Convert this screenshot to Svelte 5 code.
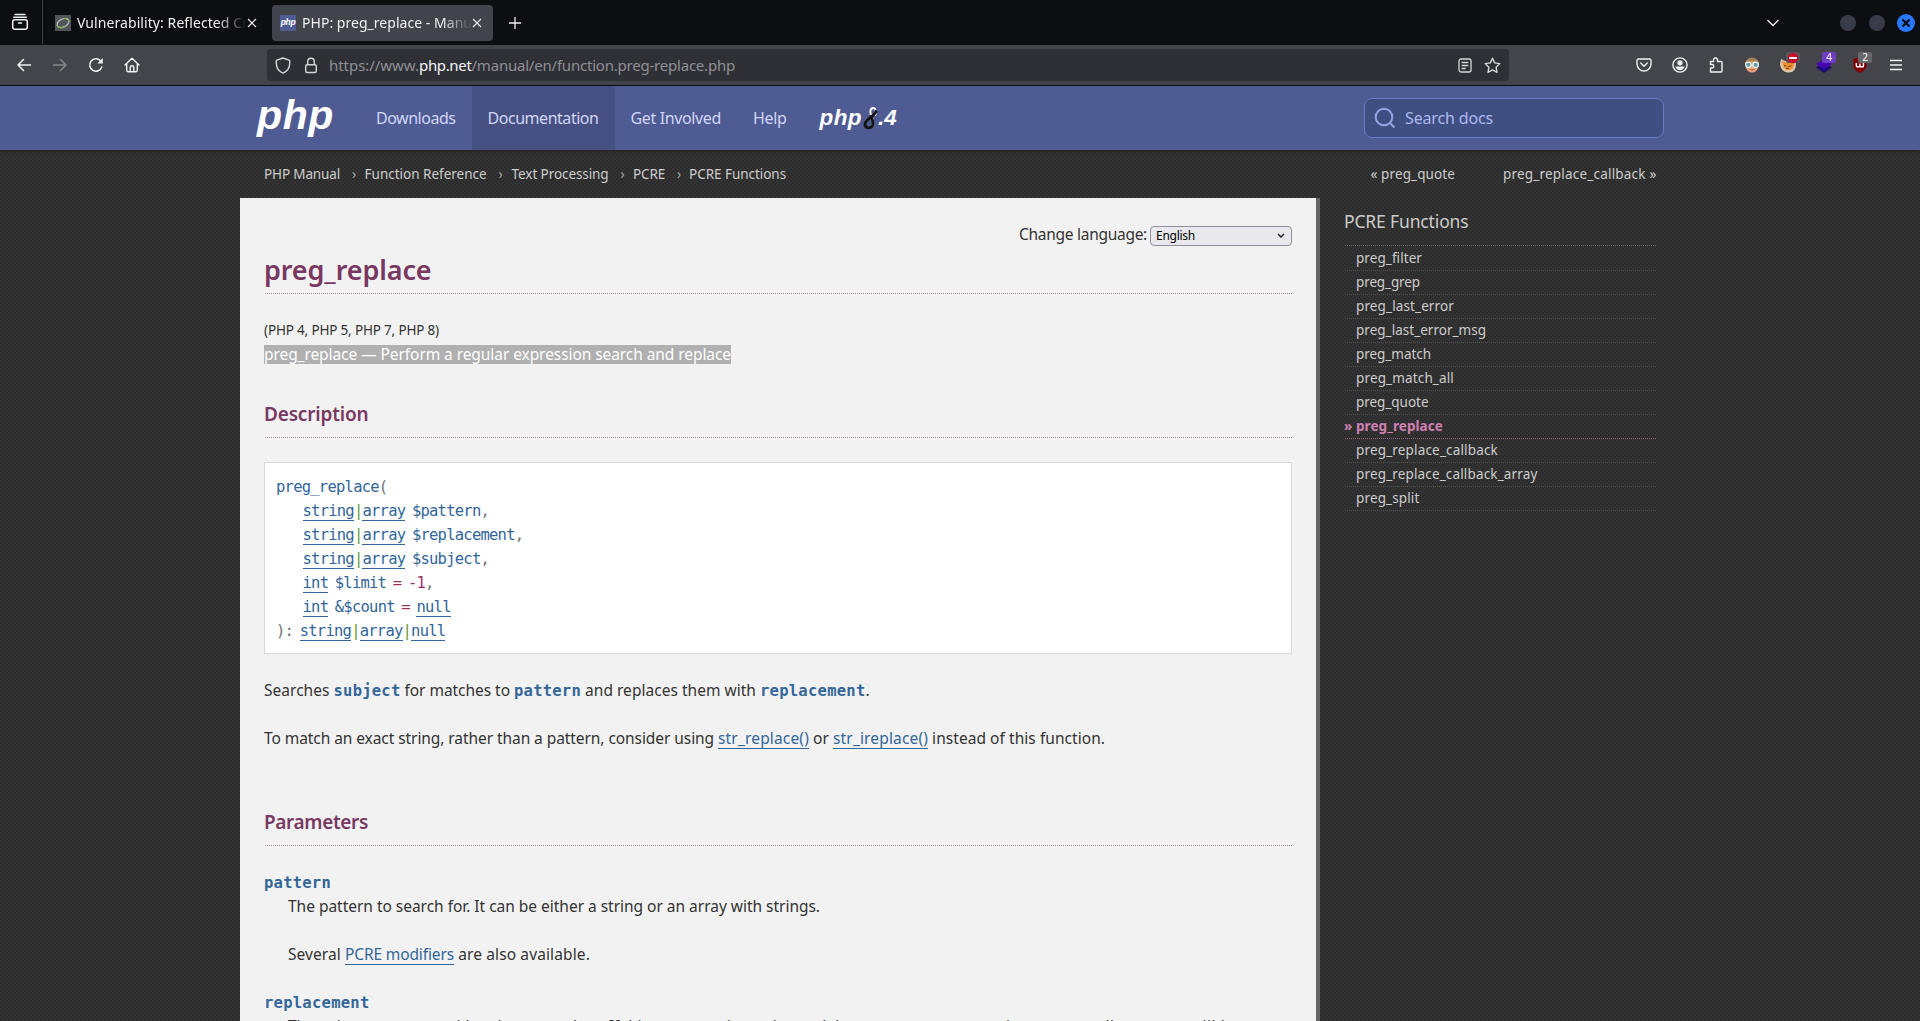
<script>
  // Tunes letter-spacing so that a run of text occupies the given width.
  function fit(node, width) {
    const natural = node.getBoundingClientRect().width;
    const count = [...node.textContent].length;
    if (width && count) node.style.letterSpacing = `${(width - natural) / count}px`;
  }

  const menu = [
    { label: 'Downloads', w: 79.5 },
    { label: 'Documentation', w: 111, active: true },
    { label: 'Get Involved', w: 90.5 },
    { label: 'Help', w: 33.5 }
  ];

  const crumbs = [
    { label: 'PHP Manual', w: 76, cell: 100.6 },
    { label: 'Function Reference', w: 122, cell: 147 },
    { label: 'Text Processing', w: 97, cell: 121.5 },
    { label: 'PCRE', w: 32, cell: 56 },
    { label: 'PCRE Functions', w: 97, cell: 98 }
  ];

  const functions = [
    ['preg_filter', 66], ['preg_grep', 64], ['preg_last_error', 98],
    ['preg_last_error_msg', 130], ['preg_match', 75], ['preg_match_all', 98],
    ['preg_quote', 72.5], ['preg_replace', 87], ['preg_replace_callback', 142],
    ['preg_replace_callback_array', 181.5], ['preg_split', 63.5]
  ];
  const current = 'preg_replace';

  // Each signature row is a list of [text, width, kind] runs.
  const ch = 8.57;
  const args = [
    [['string', 6 * ch, 'link'], ['|', ch, 'pipe'], ['array', 5 * ch, 'link'], [' ', 6.57, ''], ['$pattern', 8 * ch, 'name'], [',', ch, '']],
    [['string', 6 * ch, 'link'], ['|', ch, 'pipe'], ['array', 5 * ch, 'link'], [' ', 6.57, ''], ['$replacement', 12 * ch, 'name'], [',', ch, '']],
    [['string', 6 * ch, 'link'], ['|', ch, 'pipe'], ['array', 5 * ch, 'link'], [' ', 6.57, ''], ['$subject', 8 * ch, 'name'], [',', ch, '']],
    [['int', 3 * ch, 'link'], [' ', 6.57, ''], ['$limit', 6 * ch, 'name'], [' ', 6.57, ''], ['=', ch, 'init'], [' ', 6.57, ''], ['-1', 2 * ch, 'init'], [',', ch, '']],
    [['int', 3 * ch, 'link'], [' ', 6.57, ''], ['&$count', 7 * ch, 'name'], [' ', 6.57, ''], ['=', ch, 'init'], [' ', 6.57, ''], ['null', 4 * ch, 'link']]
  ];
  const returns = [['):', 2 * ch, ''], [' ', 6.57, ''], ['string', 6 * ch, 'link'], ['|', ch, 'pipe'], ['array', 5 * ch, 'link'], ['|', ch, 'pipe'], ['null', 4 * ch, 'link']];
</script>

{#snippet run(text, width, kind)}
  <span class="run {kind}" use:fit={width}>{text}</span>
{/snippet}

<div class="browser">
  <div class="tabs">
    <div class="firefox-view">
      <svg width="18" height="18" viewBox="0 0 18 18" fill="none" stroke="#f0f0f2" stroke-width="1.5" stroke-linecap="round">
        <path d="M4 1.5h10M2.7 4.2h12.6" /><rect x="1.7" y="6.7" width="14.6" height="9.6" rx="2" /><path d="M7.5 10h3" />
      </svg>
    </div>
    <div class="tab">
      <svg class="favicon" width="16" height="16" viewBox="0 0 16 16">
        <rect width="16" height="16" fill="#50565a" />
        <ellipse cx="8" cy="8" rx="6.3" ry="4" transform="rotate(-25 8 8)" fill="none" stroke="#b9bfc0" stroke-width="1.2" />
        <path d="M2 10.5c1 3 5 3 8.5 .5M9 3.5c3-.8 5 .5 5 2.5" fill="none" stroke="#8cb83a" stroke-width="1" />
      </svg>
      <div class="title">{@render run('Vulnerability: Reflected Cr', 171, '')}</div>
      <svg class="x" width="10" height="10" viewBox="0 0 10 10"><path d="M1 1l8 8M9 1l-8 8" stroke="#e8e8ea" stroke-width="1.2" /></svg>
    </div>
    <div class="tab selected">
      <div class="favicon phpicon">php</div>
      <div class="title">{@render run('PHP: preg_replace - Manu', 170, '')}</div>
      <svg class="x" width="10" height="10" viewBox="0 0 10 10"><path d="M1 1l8 8M9 1l-8 8" stroke="#e8e8ea" stroke-width="1.2" /></svg>
    </div>
    <svg class="plus" width="12" height="12" viewBox="0 0 12 12"><path d="M6 0v12M0 6h12" stroke="#f0f0f2" stroke-width="1.3" /></svg>
    <svg class="down" width="14" height="8" viewBox="0 0 14 8"><path d="M1.5 1l5.5 5.5L12.5 1" fill="none" stroke="#f0f0f2" stroke-width="1.4" /></svg>
    <div class="window">
      <i></i><i></i>
      <svg width="18" height="18" viewBox="0 0 18 18"><circle cx="9" cy="9" r="9" fill="#2777ff" /><path d="M5.5 5.5l7 7M12.5 5.5l-7 7" stroke="#0c0d12" stroke-width="2.3" /></svg>
    </div>
  </div>

  <div class="toolbar">
    <div class="controls">
      <svg width="16" height="16" viewBox="0 0 16 16" fill="none" stroke="#f2f2f4" stroke-width="1.5" stroke-linecap="round" stroke-linejoin="round"><path d="M14.5 8H2M7.5 2.5L2 8l5.5 5.5" /></svg>
      <svg width="16" height="16" viewBox="0 0 16 16" fill="none" stroke="#85868b" stroke-width="1.5" stroke-linecap="round" stroke-linejoin="round"><path d="M1.5 8H14M8.5 2.5L14 8l-5.5 5.5" /></svg>
      <svg width="16" height="16" viewBox="0 0 16 16" fill="none" stroke="#f2f2f4" stroke-width="1.5" stroke-linecap="round"><path d="M13.8 10A6.2 6.2 0 1 1 12.5 3.8" /><path d="M14.8 1v5.5H9.3z" fill="#f2f2f4" stroke="none" /></svg>
      <svg width="16" height="16" viewBox="0 0 16 16" fill="none" stroke="#f2f2f4" stroke-width="1.4" stroke-linecap="round" stroke-linejoin="round"><path d="M1 8l7-6.8L15 8M2.7 7v6.2a1.5 1.5 0 0 0 1.5 1.5h7.6a1.5 1.5 0 0 0 1.5-1.5V7" /><path d="M6.2 14.5v-4a1.8 1.8 0 0 1 3.6 0v4" /></svg>
    </div>
    <div class="urlbar">
      <svg class="shield" width="16" height="17" viewBox="0 0 16 17" fill="none" stroke="#d6d6da" stroke-width="1.4" stroke-linejoin="round"><path d="M8 1L1.3 3.3v3.2c0 4.3 2.5 7.7 6.7 9.7 4.2-2 6.7-5.4 6.7-9.7V3.3z" /></svg>
      <svg class="lock" width="14" height="17" viewBox="0 0 14 17" fill="none" stroke="#d6d6da" stroke-width="1.4"><rect x="1.7" y="7.7" width="10.6" height="7.8" rx="1.5" /><path d="M3.7 7.5V4.5a3.3 3.3 0 0 1 6.6 0v3" /></svg>
      <div class="url">
        {@render run('https://www.', 90, '')}{@render run('php.net', 52.5, 'host')}{@render run('/manual/en/function.preg-replace.php', 263.5, '')}
      </div>
      <svg width="14" height="15" viewBox="0 0 14 15" fill="none" stroke="#d6d6da" stroke-width="1.3"><rect x="1" y="1" width="12" height="13" rx="2" /><path d="M3.7 4.5h6.6M3.7 7.5h6.6M3.7 10.5h4" /></svg>
      <svg class="star" width="17" height="17" viewBox="0 0 17 17" fill="none" stroke="#d6d6da" stroke-width="1.4" stroke-linejoin="round"><path d="M8.5 1.2l2.2 4.7 5.1.7-3.7 3.6.9 5.2-4.5-2.5L4 15.4l.9-5.2L1.2 6.6l5.1-.7z" /></svg>
    </div>
    <div class="extensions">
      <svg width="16" height="16" viewBox="0 0 16 16" fill="none" stroke="#f2f2f4" stroke-width="1.4" stroke-linecap="round" stroke-linejoin="round"><path d="M2.5 2h11a1.5 1.5 0 0 1 1.5 1.5V7A7 7 0 0 1 1 7V3.5A1.5 1.5 0 0 1 2.5 2z" /><path d="M4.7 6L8 9.2 11.3 6" /></svg>
      <svg width="16" height="16" viewBox="0 0 16 16"><circle cx="8" cy="8" r="7.1" fill="none" stroke="#f2f2f4" stroke-width="1.4" /><circle cx="8" cy="5.8" r="2.6" fill="#f2f2f4" /><path d="M3.5 9.5h9c-.5 2.3-2.2 3.7-4.5 3.7s-4-1.4-4.5-3.7z" fill="#f2f2f4" /></svg>
      <svg width="16" height="16" viewBox="0 0 16 16" fill="none" stroke="#f2f2f4" stroke-width="1.4" stroke-linejoin="round"><path d="M5.5 4.5V3a2 2 0 0 1 4 0v1.500H13a1 1 0 0 1 1 1V14a1 1 0 0 1-1 1H2.5v-4H4a1.5 1.5 0 0 0 0-3.5H2.5v-3z" /></svg>
      <svg width="16" height="16" viewBox="0 0 16 16"><path d="M1 7.5a7 7 0 0 1 14 0z" fill="#a9804f" /><path d="M2 7h12v3a6 5.5 0 0 1-12 0z" fill="#e9a47d" /><path d="M3 5.5q5-3 10 0v1.5H3z" fill="#c8a276" /><circle cx="4.3" cy="7.8" r="2.7" fill="#5e9dab" stroke="#f4f8fa" stroke-width="1.2" /><circle cx="11.7" cy="7.8" r="2.7" fill="#5e9dab" stroke="#f4f8fa" stroke-width="1.2" /><path d="M5.5 12.5q2.5 1 5 0" stroke="#b75f4c" fill="none" /></svg>
      <div class="ext">
        <svg width="18" height="18" viewBox="0 0 18 18"><path d="M2 3l4 2h7l3-1 1 4c0 5-2.5 8.5-7 8.5S1.5 14 1 8z" fill="#dcc4a8" /><path d="M3.5 5L7 6.5l5-.5 3 1c0 4.5-1.5 7-5.5 7S4 11 3.5 5z" fill="#f1902c" /><path d="M5 9.5l2 .7M9.5 10.5l3-.8M7 12.5h3" stroke="#653713" /></svg>
        <span class="badge block"><svg width="12" height="12" viewBox="0 0 12 12"><circle cx="6" cy="6" r="5.3" fill="#c4102e" /><path d="M2.2 6h7.6" stroke="#fff" stroke-width="2" /></svg></span>
      </div>
      <div class="ext">
        <svg width="18" height="18" viewBox="0 0 18 18"><path d="M1 11.5L9 7l8 4.500-8 5.500z" fill="#1d0b76" /><path d="M1 8L9 3l8 5-8 5.500z" fill="#4308b0" /></svg>
        <span class="badge purple">4</span>
      </div>
      <div class="ext">
        <svg width="18" height="18" viewBox="0 0 18 18"><path d="M9 1l6.500 2v6c0 4-2.500 6.200-6.500 8-4-1.800-6.500-4-6.500-8V3z" fill="#800007" /><path d="M5.300 7v2.200a1.800 1.800 0 0 0 3.600 0V7.500v1.700a1.800 1.800 0 0 0 3.600 0V7" fill="none" stroke="#fff" stroke-width="1.4" /></svg>
        <span class="badge">2</span>
      </div>
      <svg width="14" height="12" viewBox="0 0 14 12"><path d="M1 1.5h12M1 6h12M1 10.5h12" stroke="#f2f2f4" stroke-width="1.3" /></svg>
    </div>
  </div>

  <header>
    <div class="logo">{@render run('php', 77, '')}</div>
    <nav>
      {#each menu as item}
        <div class="item" class:active={item.active}>{@render run(item.label, item.w, '')}</div>
      {/each}
    </nav>
    <div class="release">
      {@render run('php', 42.5, '')}
      <svg width="16" height="24" viewBox="0 0 16 24" fill="none" stroke-width="2.8" stroke-linecap="round">
        <path d="M12.5 9C13.5 4 12 1.5 9.8 2 6.5 3 7 7 8.5 10c2 4 3 8-.5 10.5" stroke="#fff" stroke-width="1.9" />
        <path d="M13 5.500C12 10 2 13 2 18.500c0 4 5.500 4.500 7.500.8 1.500-3-.2-6-1.500-9" stroke="#131313" />
      </svg>
      {@render run('.4', 19, '')}
    </div>
    <div class="search">
      <svg width="22" height="22" viewBox="0 0 22 22" fill="none" stroke="#96a3e0" stroke-width="2"><circle cx="10" cy="10" r="8.3" /><path d="M16 16l4.5 4.5" /></svg>
      {@render run('Search docs', 88, '')}
    </div>
  </header>

  <div class="trail">
    <div class="crumbs">
      {#each crumbs as crumb, i}
        <div class="crumb" style:width="{crumb.cell}px">
          {@render run(crumb.label, crumb.w, '')}
          {#if i < crumbs.length - 1}<b>›</b>{/if}
        </div>
      {/each}
    </div>
    <div class="prevnext">{@render run('« preg_quote', 84.5, '')}{@render run('preg_replace_callback »', 153.5, '')}</div>
  </div>

  <div class="page">
    <main>
      <div class="language">
        {@render run('Change language:', 128, '')}
        <div class="select">{@render run('English', 39, '')}<svg width="8" height="6" viewBox="0 0 8 6"><path d="M1 1l3 3 3-3" fill="none" stroke="#15141a" stroke-width="1.4" /></svg></div>
      </div>
      <h1>{@render run('preg_replace', 167.5, '')}</h1>
      <p class="line version">{@render run('(PHP 4, PHP 5, PHP 7, PHP 8)', 175, '')}</p>
      <p class="line purpose">{@render run('preg_replace — Perform a regular expression search and replace', 467, 'marked')}</p>

      <h2>{@render run('Description', 104.5, '')}</h2>
      <div class="synopsis">
        <div class="line">{@render run('preg_replace', 12 * ch, 'name')}{@render run('(', ch, '')}</div>
        {#each args as row}
          <div class="line arg">{#each row as [text, width, kind]}{@render run(text, width, kind)}{/each}</div>
        {/each}
        <div class="line">{#each returns as [text, width, kind]}{@render run(text, width, kind)}{/each}</div>
      </div>
      <p class="line gap">{@render run('Searches ', 69.5, '')}{@render run('subject', 67, 'code')}{@render run(' for matches to ', 113.5, '')}{@render run('pattern', 67, 'code')}{@render run(' and replaces them with ', 179, '')}{@render run('replacement', 105.5, 'code')}{@render run('.', 4, '')}</p>
      <p class="line">{@render run('To match an exact string, rather than a pattern, consider using ', 454, '')}{@render run('str_replace()', 91, 'link')}{@render run(' or ', 24, '')}{@render run('str_ireplace()', 95, 'link')}{@render run(' instead of this function.', 177, '')}</p>

      <h2>{@render run('Parameters', 104, '')}</h2>
      <dl>
        <dt class="line">{@render run('pattern', 67, 'code')}</dt>
        <dd>
          <p class="line">{@render run('The pattern to search for. It can be either a string or an array with strings.', 532, '')}</p>
          <p class="line">{@render run('Several ', 57, '')}{@render run('PCRE modifiers', 109, 'link')}{@render run(' are also available.', 136, '')}</p>
        </dd>
        <dt class="line">{@render run('replacement', 105.5, 'code')}</dt>
        <dd><p class="line">{@render run('The string or an array with strings to replace. If this argument is a string and the ', 569, '')}{@render run('pattern parameter is an array, all patterns will be', 383, '')}</p></dd>
      </dl>
    </main>
    <aside>
      <h3>{@render run('PCRE Functions', 124.5, '')}</h3>
      <ul>
        {#each functions as [name, width]}
          <li class:current={name === current}><span class="mark">{name === current ? '»' : ''}</span>{@render run(name, width, '')}</li>
        {/each}
      </ul>
    </aside>
  </div>
</div>

<style>
  :global(body) { margin: 0; overflow: hidden; }
  .browser {
    width: 1920px; height: 1021px; overflow: hidden; display: flex; flex-direction: column;
    font: 15.5px/24px "Noto Sans", "Open Sans", sans-serif; color: #333;
    background: repeating-conic-gradient(#2c2c2c 0 25%, #333 0 50%) 0 0 / 4px 4px;
  }
  .run { flex: none; white-space: pre; }
  svg { flex: none; display: block; }
  p, h1, h2, h3, ul, dl, dd { margin: 0; padding: 0; }
  .line { display: flex; height: 24px; align-items: baseline; }

  .tabs { flex: none; height: 45px; background: #0d0e12; display: flex; align-items: center; color: #f0f0f2; font-size: 14px; }
  .firefox-view { box-sizing: border-box; width: 43px; height: 44px; align-self: flex-start; padding: 13px 0 0 11px; border-right: 1px solid #404147; }
  .tab { box-sizing: border-box; width: 221px; height: 36px; margin-left: 4px; padding: 0 11px 0 8px; border-radius: 4px; display: flex; align-items: center; }
  .tab + .tab { margin-left: 4px; }
  .selected { background: #42444b; }
  .favicon { flex: none; width: 16px; height: 16px; }
  .phpicon { background: #4f5b93; border-radius: 1px; font: italic bold 8.5px/14px "Liberation Sans", sans-serif; color: #fff; text-align: center; letter-spacing: -.3px; }
  .title { width: 172px; margin: 0 -1px 0 6px; display: flex; mask-image: linear-gradient(90deg, #000 140px, transparent 170px); }
  .plus { margin-left: 16px; }
  .down { margin-left: auto; }
  .window { display: flex; align-items: center; gap: 13px; margin: 0 5px 0 60px; }
  .window i { width: 16px; height: 16px; border-radius: 50%; background: #383c4a; }
  .window i + i { margin-right: -1px; }

  .toolbar { flex: none; box-sizing: border-box; height: 41px; background: #43454b; border-bottom: 1px solid #0e0e12; display: flex; align-items: center; }
  .controls { box-sizing: border-box; display: flex; gap: 20px; width: 267px; padding-left: 16px; }
  .urlbar { box-sizing: border-box; width: 1242px; height: 32px; border-radius: 4px; background: #2f3035; display: flex; align-items: center; padding: 0 8px 0 8px; color: #8e8f95; font-size: 15px; }
  .lock { margin-left: 13px; }
  .url { display: flex; flex: 1; margin-left: 11px; }
  .host { color: #f5f5f7; }
  .star { margin-left: 12px; }
  .extensions { display: grid; grid-template-columns: repeat(8, 36px); justify-items: center; align-items: center; margin-left: 117px; }
  .ext { position: relative; width: 18px; height: 18px; }
  .badge { position: absolute; right: -3px; top: -4px; width: 14px; height: 11px; border-radius: 2px; background: #676869; color: #fff; font-size: 10px; line-height: 11px; text-align: center; }
  .purple { background: #6f3dc4; }
  .block { background: #55565a; }
  .block svg { margin-left: 1px; }

  header { flex: none; height: 64px; background: #4f5b93; display: flex; align-items: center; color: #d0d6f8; font-size: 16px; box-shadow: 0 1px 3px #222; }
  .logo { width: 88px; margin-left: 257px; font: italic bold 41px/59px "Liberation Sans", sans-serif; color: #fff; display: flex; height: 64px; }
  nav { display: flex; margin-left: 15px; }
  .item { padding: 0 16px; line-height: 64px; display: flex; }
  .active { background: #465082; }
  .release { display: flex; align-items: center; margin-left: 17px; font: italic bold 22.5px/22px "Liberation Sans", sans-serif; color: #fff; }
  .release svg { margin-left: 1px; margin-right: -1px; }
  .search { box-sizing: border-box; width: 300px; height: 40px; margin-left: auto; margin-right: 256px; border: 1px solid #6a78c8; border-radius: 8px; background: #404f82; display: flex; align-items: center; padding-left: 9px; gap: 9px; color: #acb8f0; }

  .trail { flex: none; height: 48px; display: flex; align-items: center; font-size: 13.5px; color: #ccc; }
  .crumbs { display: flex; padding-left: 264px; }
  .crumb { display: flex; }
  .crumb b { margin-left: 12px; font-weight: 400; color: #aaa; }
  .prevnext { display: flex; gap: 48px; margin-left: auto; margin-right: 263.5px; }

  .page { display: flex; padding-left: 240px; height: 823px; }
  main { box-sizing: border-box; width: 1080px; background: #f2f2f2; border-right: 4px solid #666; padding: 24px 24px 0; }
  .language { display: flex; height: 24px; justify-content: flex-end; }
  .select { box-sizing: border-box; width: 142px; height: 20px; margin: 4px 0 0 3px; border: 1px solid #8f8f9d; border-radius: 4px; background: #e9e9ed; color: #000; font-size: 12px; line-height: 18px; display: flex; justify-content: space-between; align-items: center; padding: 0 6px 0 5px; }
  h1 { display: flex; margin: 3px 0 0 1px; padding-bottom: 2px; border-bottom: 1px dotted #a98aa0; font: 600 27px/42px "Noto Sans", sans-serif; color: #793862; }
  h1 .run, h2 .run { margin-left: -1px; }
  h2 { display: flex; margin: 36px 0 0 1px; padding-bottom: 11px; border-bottom: 1px dotted #a98aa0; font: 600 19px/24px "Noto Sans", sans-serif; color: #793862; }
  .version { margin-top: 24px; font-size: 13.5px; }
  .purpose { box-sizing: border-box; padding-top: 3px; align-items: flex-start; }
  .marked { height: 19px; line-height: 19px; background: #b0b0b0; color: #fff; }
  .synopsis { box-sizing: border-box; height: 192px; margin: 24px 0; border: 1px solid #d9d9d9; background: #fff; padding: 12px 11px 10px; font: 15.5px/24px "DejaVu Sans Mono", monospace; color: #737373; }
  .arg { padding-left: 26.5px; }
  .name, .link { color: #369; }
  .link { background: linear-gradient(#369, #369) 0 22px / 100% 1px no-repeat; }
  .synopsis .link { background-position: 0 21px; }
  .pipe { color: #693; }
  .init { color: #936; }
  .code { font: bold 15.5px/24px "DejaVu Sans Mono", monospace; color: #369; }
  .gap + .line { margin: 24px 0 60px; }
  dl { padding-top: 24px; }
  dt.line { box-sizing: border-box; padding-top: 1px; }
  dd { padding-left: 24px; }
  dd p + p { margin: 24px 0; }

  aside { padding: 10px 0 0 25px; width: 311px; color: #ccc; font-size: 13.5px; }
  h3 { display: flex; height: 37px; border-bottom: 1px dotted #666; font: 400 17.5px/26px "Noto Sans", sans-serif; }
  h3 .run { margin-left: -1px; }
  ul { list-style: none; }
  li { box-sizing: border-box; height: 24px; border-bottom: 1px dotted #555; display: flex; align-items: center; line-height: 20px; padding-bottom: 2px; }
  li:first-child { height: 25px; padding-bottom: 1px; }
  .mark { width: 12px; margin-left: -1px; }
  .current { color: #d081b4; font-weight: bold; border-color: #96607f; }
</style>
